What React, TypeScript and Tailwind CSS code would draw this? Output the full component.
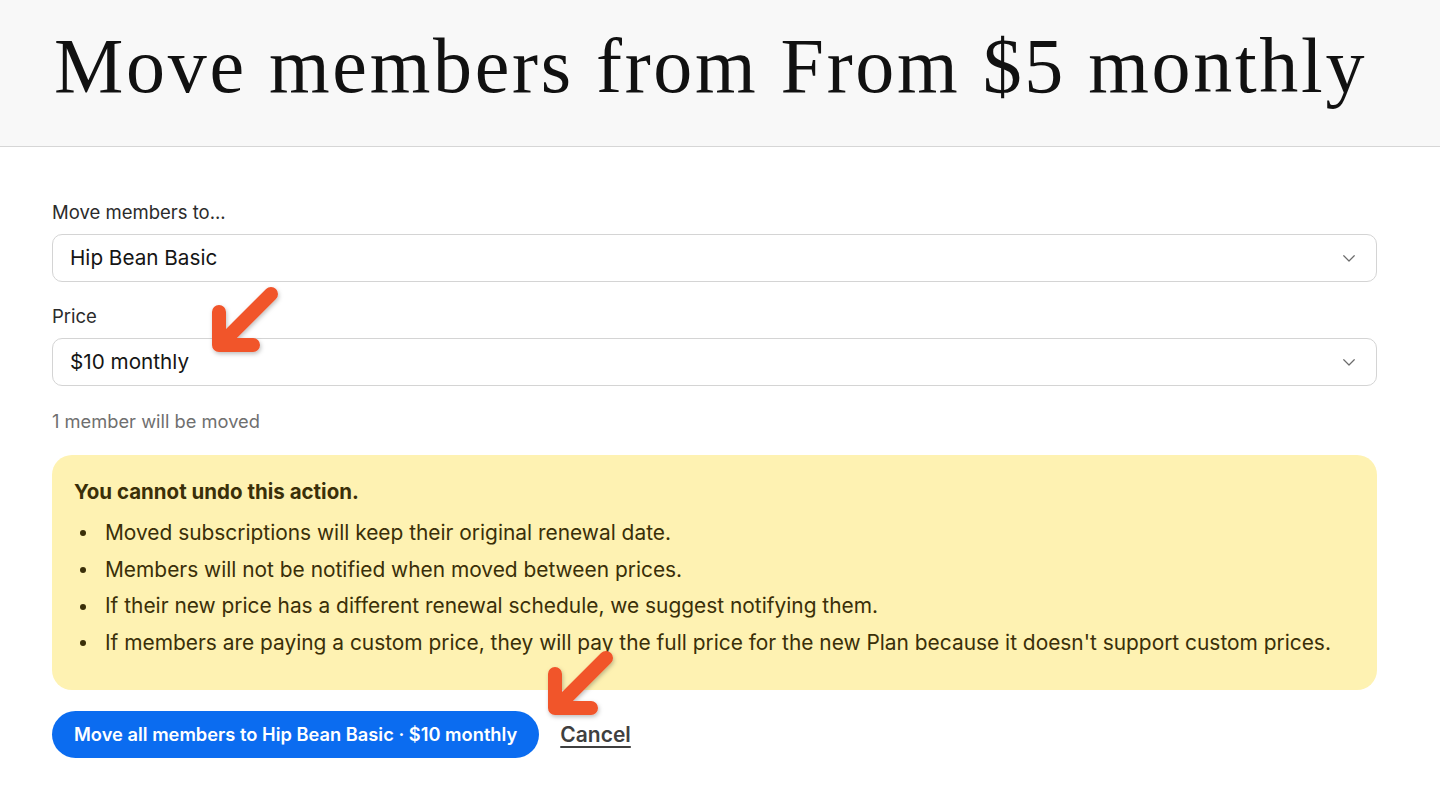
import React from 'react';

const ChevronDown = () => (
  <svg width="18" height="18" viewBox="0 0 24 24" fill="none" stroke="#6b6b6b" strokeWidth="1.6" strokeLinecap="round" strokeLinejoin="round">
    <path d="M5 9l7 7 7-7" />
  </svg>
);

const SelectBox = ({ value }: { value: string }) => (
  <div className="flex h-[48px] items-center justify-between rounded-[10px] border border-[#d4d4d4] bg-white pl-[17px] pr-[18px] text-[20.7px] text-[#151515]">
    <span>{value}</span>
    <ChevronDown />
  </div>
);

const bullets = [
  'Moved subscriptions will keep their original renewal date.',
  'Members will not be notified when moved between prices.',
  'If their new price has a different renewal schedule, we suggest notifying them.',
  "If members are paying a custom price, they will pay the full price for the new Plan because it doesn't support custom prices.",
];

const App = () => {
  return (
    <div className="relative min-h-[801px] bg-white font-['Inter',sans-serif]">
      {/* Header */}
      <div className="flex h-[147px] items-center border-b border-[#d6d6d6] bg-[#f8f8f8] px-[54px] pb-[14px]">
        <h1 className="font-['Liberation_Serif',serif] text-[78px] leading-none tracking-[2.7px] text-[#111]">
          Move members from From $5 monthly
        </h1>
      </div>

      {/* Form */}
      <div className="pl-[52px] pr-[63px] pt-[53px]">
        <div className="mb-[10px] text-[18.5px] leading-[24px] text-[#2b2b2b]">Move members to...</div>
        <SelectBox value="Hip Bean Basic" />

        <div className="mb-[10px] mt-[22px] text-[18.5px] leading-[24px] text-[#2b2b2b]">Price</div>
        <SelectBox value="$10 monthly" />

        <div className="mt-[23px] text-[18.3px] leading-[24px] text-[#6f6f6f]">1 member will be moved</div>

        <div className="mt-[22px] rounded-[20px] bg-[#fef2b2] pb-[28px] pl-[22px] pr-[22px] pt-[23px] text-[#3a2f08]">
          <div className="text-[20.5px] font-bold leading-[28px]">You cannot undo this action.</div>
          <ul className="mt-[9px]">
            {bullets.map((b) => (
              <li key={b} className="flex items-center text-[20.9px] leading-[36.7px]">
                <span className="ml-[6px] mr-[19px] inline-block h-[6px] w-[6px] rounded-full bg-[#3a2f08]" />
                <span>{b}</span>
              </li>
            ))}
          </ul>
        </div>

        <div className="mt-[21px] flex items-center gap-[21px]">
          <button className="h-[47px] rounded-full bg-[#0b6cf0] px-[22px] text-[18.3px] font-semibold text-white">
            Move all members to Hip Bean Basic · $10 monthly
          </button>
          <button className="text-[21px] font-semibold text-[#3f3f3f] underline underline-offset-[4px]">Cancel</button>
        </div>
      </div>

      {/* Annotation arrows */}
      <svg className="pointer-events-none absolute left-0 top-0" width="1440" height="801">
        <defs>
          <filter id="sh" x="-20%" y="-20%" width="140%" height="140%">
            <feDropShadow dx="1" dy="2" stdDeviation="2" floodColor="#000" floodOpacity="0.25" />
          </filter>
        </defs>
        <g fill="none" stroke="#f1542b" strokeWidth="14" strokeLinecap="round" strokeLinejoin="round" filter="url(#sh)">
          <path d="M271 294 L221 344 M219 312 L219 345 L253 345" />
          <path d="M606 658 L557 707 M555 674 L555 708 L591 708" />
        </g>
      </svg>
    </div>
  );
};

export default App;
